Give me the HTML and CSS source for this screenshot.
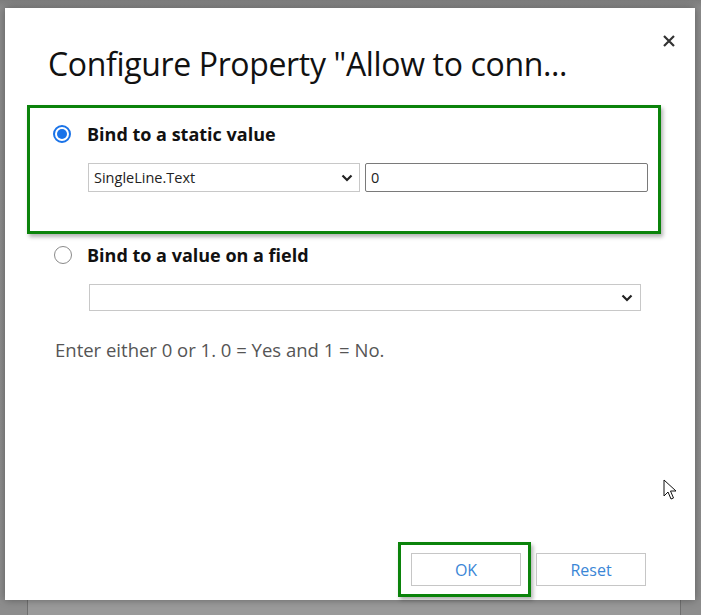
FILE: index.html
```html
<!DOCTYPE html>
<html>
<head>
<meta charset="utf-8">
<link rel="stylesheet" href="styles.css">
</head>
<body>
<div class="backdrop">
  <div class="bg-strip"></div>
  <div class="dialog">
    <button class="close" aria-label="Close">
      <svg width="14" height="14" viewBox="0 0 14 14"><path d="M2 2 L12 12 M12 2 L2 12" stroke="#333" stroke-width="2.2" fill="none"/></svg>
    </button>
    <h1 class="title">Configure Property "Allow to conn...</h1>
    <div class="option highlight">
      <div class="opt-row">
        <span class="radio checked"><span class="dot"></span></span>
        <span class="opt-label">Bind to a static value</span>
      </div>
      <div class="fields">
        <div class="select short">
          <span class="sel-text">SingleLine.Text</span>
          <svg class="chev" width="12" height="8" viewBox="0 0 12 8"><path d="M1.5 1.5 L6 6 L10.5 1.5" stroke="#222" stroke-width="2.2" fill="none"/></svg>
        </div>
        <div class="input">0</div>
      </div>
    </div>
    <div class="option plain">
      <div class="opt-row">
        <span class="radio"></span>
        <span class="opt-label">Bind to a value on a field</span>
      </div>
      <div class="fields">
        <div class="select wide">
          <span class="sel-text"></span>
          <svg class="chev" width="12" height="8" viewBox="0 0 12 8"><path d="M1.5 1.5 L6 6 L10.5 1.5" stroke="#222" stroke-width="2.2" fill="none"/></svg>
        </div>
      </div>
    </div>
    <p class="help">Enter either 0 or 1. 0 = Yes and 1 = No.</p>
    <div class="spacer"></div>
    <div class="footer">
      <div class="btn-wrap highlight-btn"><button class="btn">OK</button></div>
      <button class="btn">Reset</button>
    </div>
    <svg class="cursor" width="14" height="22" viewBox="0 0 14 22"><path d="M1 1 L1 17 L5 13 L8 20 L10.5 19 L7.5 12 L13 12 Z" fill="#fff" stroke="#111" stroke-width="1"/></svg>
  </div>
</div>
</body>
</html>
```
FILE: styles.css
```css
* { box-sizing: border-box; }
html, body { margin: 0; padding: 0; }
body {
  width: 701px;
  height: 615px;
  overflow: hidden;
  background: #8a8a8a;
  font-family: "Open Sans", "Noto Sans", sans-serif;
}
.backdrop {
  position: relative;
  width: 701px;
  height: 615px;
  padding: 8px 0 0 5px;
  background: linear-gradient(to bottom, #7d7d7d 0, #8c8c8c 8px, #8d8d8d 100%);
}
.bg-strip {
  position: absolute;
  left: 27px; right: 20px; bottom: 0; height: 15px;
  background: #9a9a9a;
  border-left: 1px solid #6f6f6f;
  border-right: 1px solid #6f6f6f;
}
.dialog {
  position: relative;
  width: 690px;
  height: 592px;
  background: #fff;
  box-shadow: 0 0 8px rgba(0,0,0,0.35);
  display: flex;
  flex-direction: column;
}
.close {
  position: absolute;
  left: 657px;
  top: 26px;
  width: 14px;
  height: 14px;
  padding: 0;
  border: 0;
  background: none;
  display: block;
}
.close svg { display: block; }
.title {
  margin: 31px 0 0 43px;
  font-weight: 400;
  font-size: 32px;
  line-height: 50px;
  color: #111;
  letter-spacing: -0.35px;
  white-space: nowrap;
}
.option { display: flex; flex-direction: column; }
.highlight {
  margin: 16px 0 0 22px;
  width: 634px;
  height: 129px;
  border: 3px solid #0b830b;
  box-shadow: 2px 3px 4px rgba(0,0,0,0.3);
  padding: 14px 0 0 23px;
}
.plain {
  margin: 9px 0 0 49px;
}
.opt-row {
  display: flex;
  align-items: center;
  height: 24px;
}
.radio {
  width: 18px;
  height: 18px;
  border-radius: 50%;
  border: 1px solid #8a8a8a;
  display: flex;
  align-items: center;
  justify-content: center;
  flex: none;
}
.radio.checked { border: 2px solid #1a73e8; }
.radio .dot { width: 10px; height: 10px; border-radius: 50%; background: #1a73e8; }
.opt-label {
  margin-left: 16px;
  font-weight: 700;
  font-size: 18px;
  color: #111;
  letter-spacing: 0;
}
.plain .opt-label { margin-left: 15px; }
.fields {
  display: flex;
  gap: 5px;
  margin: 17px 0 0 35px;
}
.plain .fields { margin-top: 17px; margin-left: 35px; }
.select {
  height: 29px;
  border: 1px solid #c8c8c8;
  display: flex;
  align-items: center;
  justify-content: space-between;
  padding: 0 6px 0 5px;
  font-size: 14.5px;
  color: #222;
}
.select.short { width: 272px; }
.select.wide { width: 552px; height: 27px; padding-right: 7px; }
.sel-text { letter-spacing: 0; }
.chev { display: block; }
.input {
  width: 283px;
  height: 29px;
  border: 1px solid #7a7a7a;
  border-radius: 2px;
  padding: 0 5px;
  display: flex;
  align-items: center;
  font-size: 14.5px;
  color: #222;
}
.help {
  margin: 26px 0 0 50px;
  font-size: 18.5px;
  font-weight: 400;
  color: #555;
  letter-spacing: 0;
}
.spacer { flex: 1; }
.footer {
  display: flex;
  justify-content: flex-end;
  align-items: center;
  gap: 5px;
  padding: 0 49px 3px 0;
}
.highlight-btn {
  border: 3px solid #0b830b;
  padding: 8px 7px 8px 10px;
  box-shadow: 2px 3px 4px rgba(0,0,0,0.3);
}
.btn {
  display: block;
  width: 110px;
  height: 33px;
  background: #fff;
  border: 1px solid #c6c6c6;
  color: #3a86d6;
  font-family: "Open Sans", "Noto Sans", sans-serif;
  font-size: 16px;
  padding: 0;
}
.cursor {
  position: absolute;
  left: 658px;
  top: 471px;
}
```
